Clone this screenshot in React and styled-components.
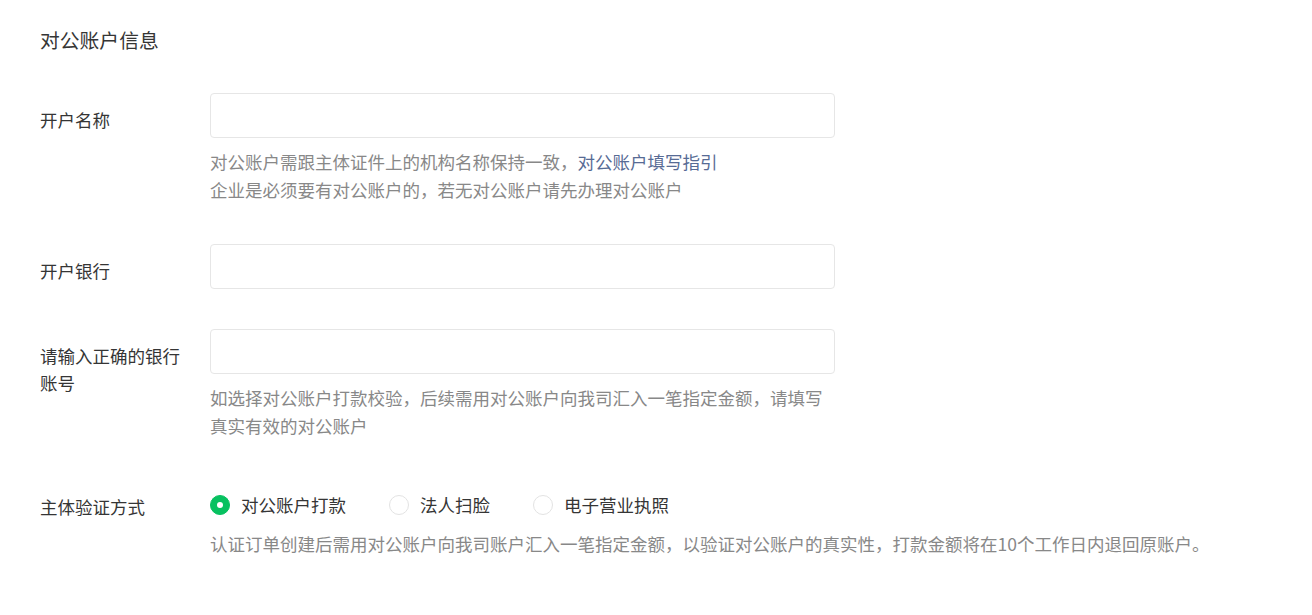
import React, { useState } from 'react'
import styled, { createGlobalStyle } from 'styled-components'

const GlobalStyle = createGlobalStyle`
    html, body {
        margin: 0;
        background: #fff;
    }
    body {
        font-family: "Noto Sans CJK SC", "Noto Sans", sans-serif;
        color: #353535;
    }
`;

const Page = styled.div`
    padding: 26px 40px 40px;
    font-size: 17.5px;
    line-height: 28px;
`;

const Title = styled.h3`
    margin: 0 0 39px;
    font-size: 19.8px;
    font-weight: 400;
    line-height: 28px;
    color: #353535;
`;

const Form = styled.div`
    display: flex;
    flex-direction: column;
    gap: 40px;
`;

const Row = styled.div`
    display: grid;
    grid-template-columns: 170px 1fr;
`;

const Label = styled.div`
    padding: ${p => p.$top || 13}px 20px 0 0;
    line-height: 27px;
    color: #353535;
`;

const Field = styled.div`
    display: flex;
    flex-direction: column;
`;

const Input = styled.input`
    box-sizing: border-box;
    width: 625px;
    height: 45px;
    border: 1px solid #e6e6e6;
    border-radius: 4px;
    padding: 0 14px;
    font: inherit;
    outline: none;
`;

const Help = styled.div`
    margin-top: ${p => p.$gap || 10}px;
    max-width: ${p => p.$width ? p.$width + 'px' : 'none'};
    color: #888;
    line-height: 28px;
`;

const Link = styled.a`
    color: #576b95;
    text-decoration: none;
`;

const Radios = styled.div`
    display: flex;
    align-items: center;
    gap: 43px;
    padding-top: 11px;
    height: 28px;
`;

const RadioItem = styled.label`
    display: flex;
    align-items: center;
    gap: 11px;
    cursor: pointer;
    color: #353535;
`;

const Dot = styled.span`
    box-sizing: border-box;
    width: 20px;
    height: 20px;
    border-radius: 50%;
    border: 1px solid ${p => p.$on ? '#07c160' : '#e3e3e3'};
    background: ${p => p.$on ? '#07c160' : '#fff'};
    display: flex;
    align-items: center;
    justify-content: center;
    &::after {
        content: '';
        width: 6px;
        height: 6px;
        border-radius: 50%;
        background: #fff;
        display: ${p => p.$on ? 'block' : 'none'};
    }
`;

const options = ['对公账户打款', '法人扫脸', '电子营业执照']

const App = () => {
    const [method, setMethod] = useState(0)
    return (
        <Page>
            <GlobalStyle />
            <Title>对公账户信息</Title>
            <Form>
                <Row>
                    <Label>开户名称</Label>
                    <Field>
                        <Input />
                        <Help $width={625}>
                            对公账户需跟主体证件上的机构名称保持一致，<Link href="#">对公账户填写指引</Link>
                            <br />
                            企业是必须要有对公账户的，若无对公账户请先办理对公账户
                        </Help>
                    </Field>
                </Row>
                <Row>
                    <Label>开户银行</Label>
                    <Field>
                        <Input />
                    </Field>
                </Row>
                <Row>
                    <Label>请输入正确的银行账号</Label>
                    <Field>
                        <Input />
                        <Help $width={625}>
                            如选择对公账户打款校验，后续需用对公账户向我司汇入一笔指定金额，请填写真实有效的对公账户
                        </Help>
                    </Field>
                </Row>
                <Row>
                    <Label>主体验证方式</Label>
                    <Field>
                        <Radios>
                            {options.map((o, i) => (
                                <RadioItem key={o} onClick={() => setMethod(i)}>
                                    <Dot $on={method === i} />
                                    {o}
                                </RadioItem>
                            ))}
                        </Radios>
                        <Help $gap={11}>
                            认证订单创建后需用对公账户向我司账户汇入一笔指定金额，以验证对公账户的真实性，打款金额将在10个工作日内退回原账户。
                        </Help>
                    </Field>
                </Row>
            </Form>
        </Page>
    )
}

export default App
